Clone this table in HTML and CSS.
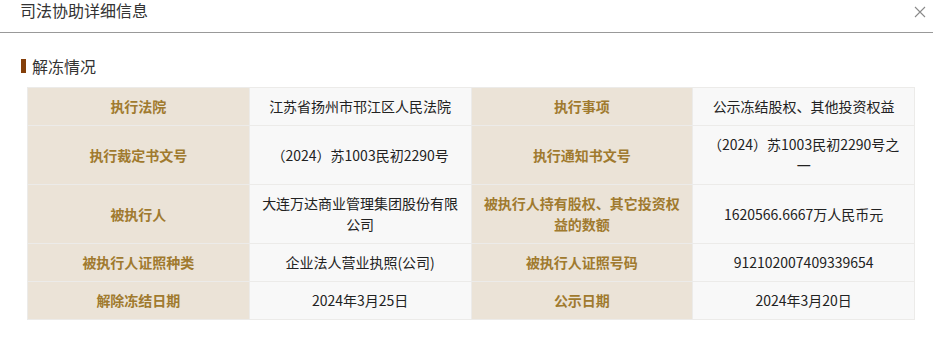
FILE: index.html
```html
<!DOCTYPE html>
<html lang="zh-CN">
<head>
<meta charset="utf-8">
<title>司法协助详细信息</title>
<link rel="stylesheet" href="styles.css">
</head>
<body>
<div class="dialog">
  <div class="dialog-header">
    <span class="dialog-title">司法协助详细信息</span>
    <svg class="close" width="12" height="12" viewBox="0 0 12 12"><path d="M1 1L11 11M11 1L1 11" stroke="#8a8a8a" stroke-width="1.1" fill="none"/></svg>
  </div>
  <div class="dialog-body">
    <div class="section-title"><span class="bar"></span>解冻情况</div>
    <table class="info">
      <tr>
        <td class="label">执行法院</td>
        <td class="value">江苏省扬州市邗江区人民法院</td>
        <td class="label">执行事项</td>
        <td class="value">公示冻结股权、其他投资权益</td>
      </tr>
      <tr>
        <td class="label">执行裁定书文号</td>
        <td class="value">（2024）苏1003民初2290号</td>
        <td class="label">执行通知书文号</td>
        <td class="value">（2024）苏1003民初2290号之一</td>
      </tr>
      <tr>
        <td class="label">被执行人</td>
        <td class="value">大连万达商业管理集团股份有限公司</td>
        <td class="label">被执行人持有股权、其它投资权益的数额</td>
        <td class="value">1620566.6667万人民币元</td>
      </tr>
      <tr>
        <td class="label">被执行人证照种类</td>
        <td class="value">企业法人营业执照(公司)</td>
        <td class="label">被执行人证照号码</td>
        <td class="value">912102007409339654</td>
      </tr>
      <tr>
        <td class="label">解除冻结日期</td>
        <td class="value">2024年3月25日</td>
        <td class="label">公示日期</td>
        <td class="value">2024年3月20日</td>
      </tr>
    </table>
  </div>
</div>
</body>
</html>
```
FILE: styles.css
```css
html, body {
  margin: 0;
  padding: 0;
  background: #fff;
}
body {
  font-family: "Noto Sans CJK SC", "Noto Sans", sans-serif;
  color: #333;
}
.dialog {
  width: 933px;
}
.dialog-header {
  height: 32px;
  border-bottom: 1px solid #999;
  display: flex;
  justify-content: space-between;
  align-items: flex-start;
  padding: 0 7px 0 20px;
}
.dialog-title {
  font-size: 16px;
  line-height: 20px;
  color: #333;
}
.close {
  margin-top: 6px;
}
.dialog-body {
  padding: 23px 18px 0 21px;
}
.section-title {
  display: flex;
  align-items: center;
  font-size: 16px;
  line-height: 20px;
  color: #333;
  gap: 6px;
}
.bar {
  width: 5px;
  height: 14px;
  background: #843f0a;
}
.info {
  margin-top: 11px;
  margin-left: 6px;
  width: 888px;
  table-layout: fixed;
  border-collapse: collapse;
  font-size: 14px;
  line-height: 21px;
}
.info td {
  border: 1px solid #ecebe9;
  padding: 8px 10px;
  text-align: center;
  vertical-align: middle;
  word-break: break-all;
}
.label {
  background: #ebe3d7;
  color: #a07a2e;
  font-weight: bold;
}
.value {
  background: #f8f8f8;
  color: #222;
}
```
